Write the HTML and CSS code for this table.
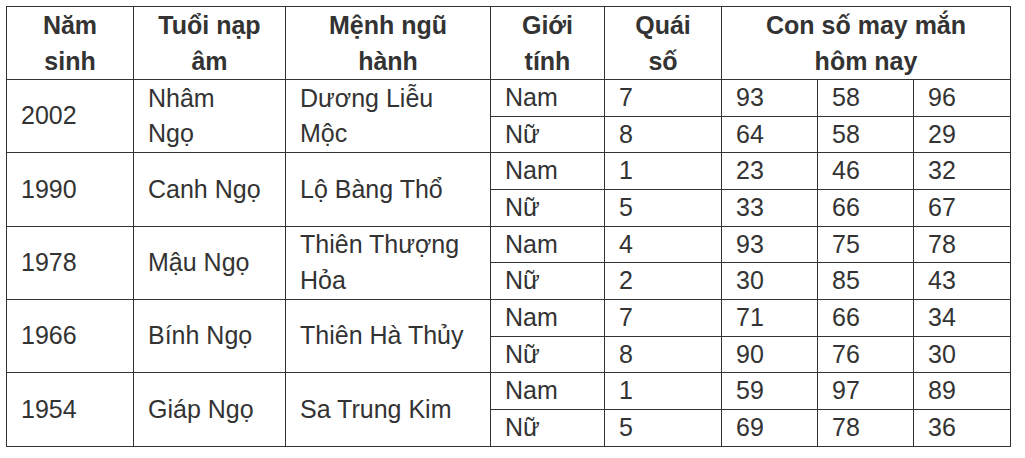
FILE: index.html
```html
<!DOCTYPE html>
<html lang="vi">
<head>
<meta charset="utf-8">
<title>Con số may mắn tuổi Ngọ</title>
<link rel="stylesheet" href="styles.css">
</head>
<body>
<table class="luck">
  <colgroup>
    <col class="c-year">
    <col class="c-napam">
    <col class="c-menh">
    <col class="c-gender">
    <col class="c-quai">
    <col class="c-num">
    <col class="c-num">
    <col class="c-num3">
  </colgroup>
  <thead>
    <tr>
      <th>Năm<br>sinh</th>
      <th>Tuổi nạp<br>âm</th>
      <th>Mệnh ngũ<br>hành</th>
      <th>Giới<br>tính</th>
      <th>Quái<br>số</th>
      <th colspan="3">Con số may mắn<br>hôm nay</th>
    </tr>
  </thead>
  <tbody>
    <tr>
      <td rowspan="2">2002</td>
      <td rowspan="2">Nhâm<br>Ngọ</td>
      <td rowspan="2">Dương Liễu<br>Mộc</td>
      <td>Nam</td><td>7</td><td>93</td><td>58</td><td>96</td>
    </tr>
    <tr><td>Nữ</td><td>8</td><td>64</td><td>58</td><td>29</td></tr>
    <tr>
      <td rowspan="2">1990</td>
      <td rowspan="2">Canh Ngọ</td>
      <td rowspan="2">Lộ Bàng Thổ</td>
      <td>Nam</td><td>1</td><td>23</td><td>46</td><td>32</td>
    </tr>
    <tr><td>Nữ</td><td>5</td><td>33</td><td>66</td><td>67</td></tr>
    <tr>
      <td rowspan="2">1978</td>
      <td rowspan="2">Mậu Ngọ</td>
      <td rowspan="2">Thiên Thượng<br>Hỏa</td>
      <td>Nam</td><td>4</td><td>93</td><td>75</td><td>78</td>
    </tr>
    <tr><td>Nữ</td><td>2</td><td>30</td><td>85</td><td>43</td></tr>
    <tr>
      <td rowspan="2">1966</td>
      <td rowspan="2">Bính Ngọ</td>
      <td rowspan="2">Thiên Hà Thủy</td>
      <td>Nam</td><td>7</td><td>71</td><td>66</td><td>34</td>
    </tr>
    <tr><td>Nữ</td><td>8</td><td>90</td><td>76</td><td>30</td></tr>
    <tr>
      <td rowspan="2">1954</td>
      <td rowspan="2">Giáp Ngọ</td>
      <td rowspan="2">Sa Trung Kim</td>
      <td>Nam</td><td>1</td><td>59</td><td>97</td><td>89</td>
    </tr>
    <tr><td>Nữ</td><td>5</td><td>69</td><td>78</td><td>36</td></tr>
  </tbody>
</table>
</body>
</html>
```
FILE: styles.css
```css
html, body {
  margin: 0;
  padding: 0;
  background: #ffffff;
}

body {
  padding: 6px 0 0 6px;
  font-family: "Liberation Sans", Arial, sans-serif;
  color: #333333;
}

.luck {
  border-collapse: collapse;
  table-layout: fixed;
  width: 1005px;
  font-size: 25px;
}

.c-year { width: 127px; }
.c-napam { width: 152px; }
.c-menh { width: 205px; }
.c-gender { width: 114px; }
.c-quai { width: 117px; }
.c-num { width: 96px; }
.c-num3 { width: 97px; }

.luck th,
.luck td {
  border: 1px solid #333333;
  padding: 0 14px;
  white-space: nowrap;
  vertical-align: middle;
}

.luck th {
  font-weight: bold;
  text-align: center;
  line-height: 36px;
}

.luck td {
  text-align: left;
  line-height: 35.67px;
}
```
